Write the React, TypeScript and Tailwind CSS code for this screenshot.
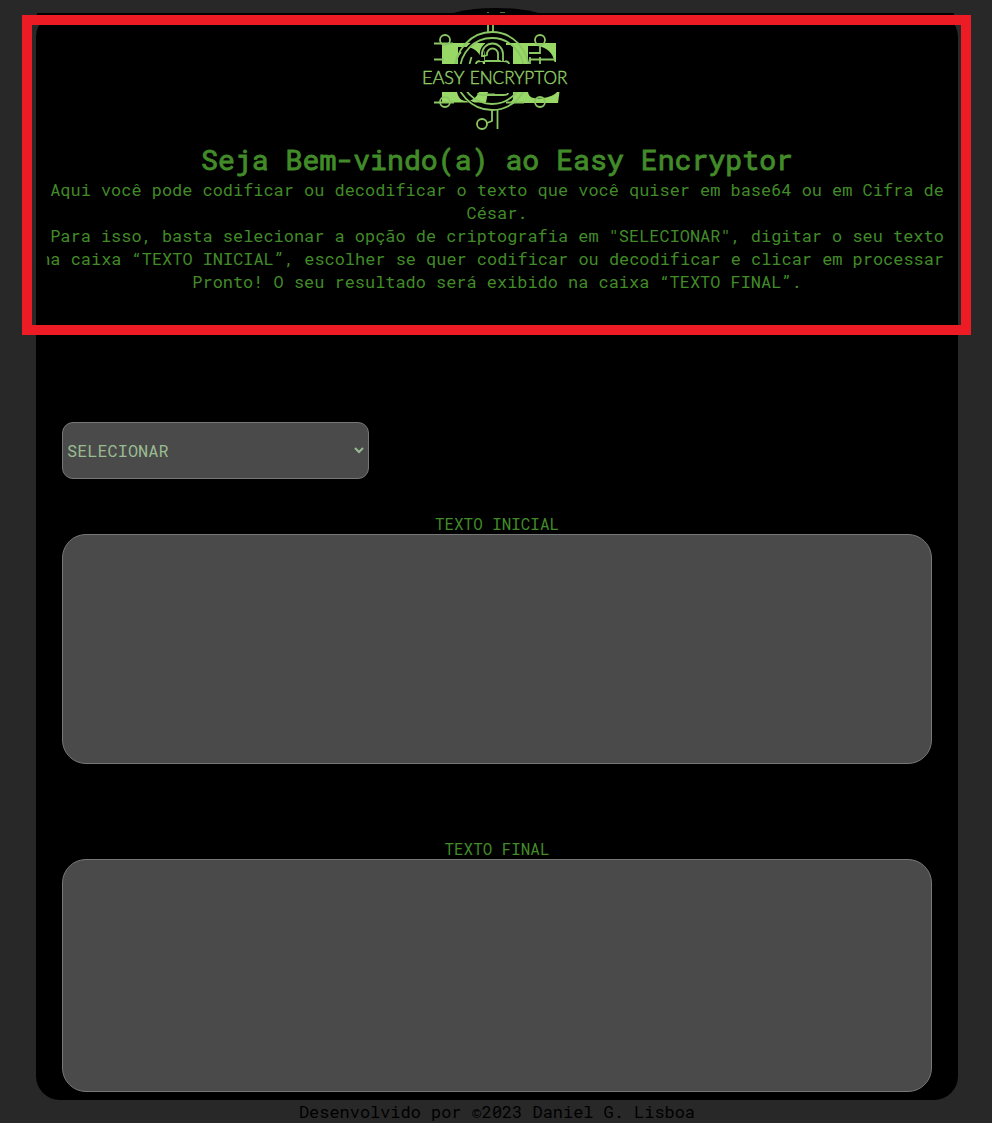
import React from "react";

function Logo() {
  return (
    <svg viewBox="0 0 170 140" className="h-[140px] w-[170px]" fill="none" stroke="#8bc763" strokeWidth="1.8">
      <ellipse cx="86" cy="22" rx="55" ry="14" fill="#000" stroke="none" />
      <path d="M77 12.5h2M90 12.5h5" strokeWidth="1" opacity=".6" />
      <path d="M78 17v16M83 17v16" />
      <g fill="#98d866" stroke="none">
        <path d="M32 43H75V64H73C71 54 66 48 57 47H48V64H32z" />
        <path d="M96 43H146V62H144.500C143 53 137 47 127 46H118V64H103V45H96z" />
        <path d="M32 92H47C48 97 51 101 56 101C62 101 66 98 69 92H78L76 102.500H32z" />
        <path d="M103 92H118C119 97 122 98.500 129 98.500C137 98 143 96 147 92H149.500L148 103H100L103 99z" />
      </g>
      <path d="M49.500 64A34 36 0 0 1 75 37M49.500 92A36 36 0 0 0 82 107" stroke="#000" strokeWidth="2.600" />
      <ellipse cx="82" cy="71" rx="37" ry="39" />
      <ellipse cx="82" cy="71" rx="32" ry="33" />
      <path d="M59.500 64l2-7M45 64c1-5 3-9 6-12" />
      <path d="M66 64c0-2 2-3 5-3h22c4 0 6 1 6 3" />
      <path d="M72 61V54a10.500 10.500 0 0 1 21 0v7" stroke="#000" strokeWidth="4.500" />
      <path d="M75 56H72V54a10.500 10.500 0 0 1 21 0v7M75 56l2-1v-1a5.500 5.500 0 0 1 11 0v7" />
      <circle cx="35" cy="40" r="5" />
      <circle cx="130" cy="40" r="5" />
      <path d="M24 43.500h19M24 59.500h10M119 53h11V45M120 57v7M130 57v7M119 59.500h26" />
      <circle cx="35" cy="102" r="5" />
      <circle cx="130" cy="102" r="5" />
      <path d="M24 102.500h20M68 93q0 2 5 2h20q5 0 5-2M78 94.500h7M96 102.500h18" />
      <path fill="#000" stroke="none" d="M10 64h151v28H10z" />
      <g fill="#91cf68" stroke="#91cf68" strokeWidth=".4" fontFamily="Lato, sans-serif" fontSize="16.800" fontWeight="300">
        <text x="12" y="83.700" textLength="42.500" lengthAdjust="spacingAndGlyphs">EASY</text>
        <text x="59.800" y="83.700" textLength="97.500" lengthAdjust="spacingAndGlyphs">ENCRYPTOR</text>
      </g>
      <circle cx="72" cy="124" r="5" />
      <path d="M77 123l5-2v-11M87.500 110v19" />
    </svg>
  );
}

function TextPanel({ label, boxClass }: { label: string; boxClass: string }) {
  return (
    <label className="flex flex-col items-center">
      <span className="h-[19px] text-[15.9px] leading-[18px] whitespace-pre">{label}</span>
      <textarea className={boxClass} />
    </label>
  );
}

export default function App() {
  return (
    <div className="relative h-[1123px] w-[992px] overflow-hidden bg-[#282828] font-['Roboto_Mono','DejaVu_Sans_Mono',monospace] text-[#428b29]">
      <div className="flex h-full flex-col items-center pt-[13px] pl-[2px]">
        <main className="relative flex h-[1087px] w-[922px] shrink-0 flex-col rounded-[24px] bg-black">
          <div className="absolute top-0 left-px h-3 w-[917px] bg-black" />
          <header className="relative -mt-[13px] flex flex-col items-center">
            <div className="-translate-x-[2px]"><Logo /></div>
            <h1 className="h-[38px] text-[28.2px] leading-[38px] font-normal whitespace-nowrap [-webkit-text-stroke:0.9px_#428b29]">Seja Bem-vindo(a) ao Easy Encryptor</h1>
            <div className="flex w-[900px] flex-col items-center overflow-hidden text-[16.93px] leading-[23px] whitespace-nowrap">
              <p>Aqui você pode codificar ou decodificar o texto que você quiser em base64 ou em Cifra de</p>
              <p>César.</p>
              <p>Para isso, basta selecionar a opção de criptografia em "SELECIONAR", digitar o seu texto</p>
              <p className="flex w-full justify-end pr-[3px]">na caixa “TEXTO INICIAL”, escolher se quer codificar ou decodificar e clicar em processar</p>
              <p>Pronto! O seu resultado será exibido na caixa “TEXTO FINAL”.</p>
            </div>
          </header>
          <section className="flex flex-col px-[26px] pt-[129px]">
            <div className="flex h-[57px] w-[307px] items-center justify-between rounded-[11px] border border-[#777] bg-[#4a4a4a] pr-[4px] pl-[4px] text-[16.93px] text-[#99bb91]">
              <span className="pt-px">SELECIONAR</span>
              <svg viewBox="0 0 10 7" className="h-[7px] w-[10px]" fill="none" stroke="currentColor" strokeWidth="2"><path d="M1 1l4 4 4-4" /></svg>
            </div>
            <div className="pt-[36px]">
              <TextPanel label="TEXTO INICIAL" boxClass="block h-[230px] w-full resize-none rounded-[24px] border border-[#777] bg-[#4a4a4a] p-4" />
            </div>
            <div className="pt-[76px]">
              <TextPanel label="TEXTO FINAL" boxClass="block h-[233px] w-full resize-none rounded-[24px] border border-[#777] bg-[#4a4a4a] p-4" />
            </div>
          </section>
        </main>
        <footer className="h-[23px] text-[16.93px] leading-[24px] whitespace-nowrap text-black">Desenvolvido por ©2023 Daniel G. Lisboa</footer>
      </div>
      <div className="pointer-events-none absolute top-[15px] left-[22px] h-[320px] w-[949px] border-[10px] border-[#ed1c24]" />
    </div>
  );
}
